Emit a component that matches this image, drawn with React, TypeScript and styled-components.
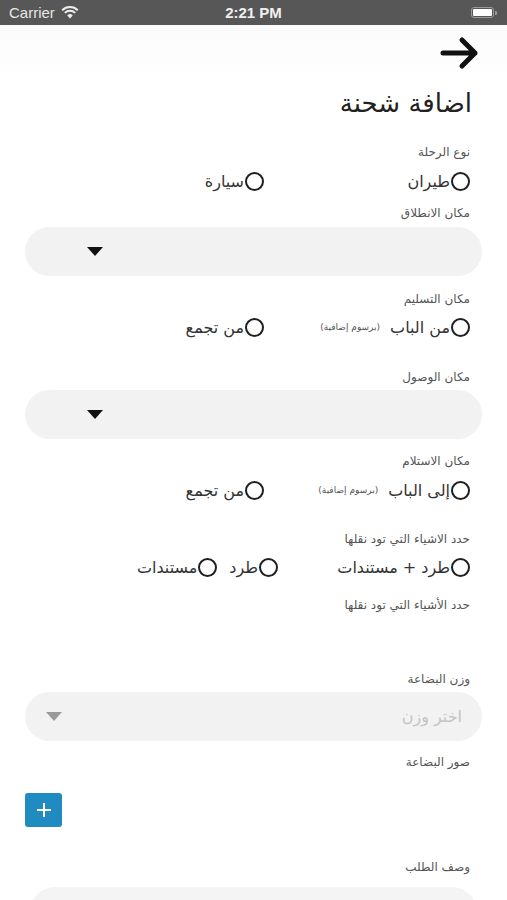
import styled, { createGlobalStyle } from 'styled-components';

const GlobalStyle = createGlobalStyle`
  html, body {
    margin: 0;
    padding: 0;
    background: #ffffff;
  }
  body {
    font-family: 'DejaVu Sans', 'Noto Sans', sans-serif;
    overflow: hidden;
  }
`;

type Option = {
  text: string;
  note?: string;
};

type RadioRowProps = {
  options: Option[];
  firstWidth?: number;
  top: number;
};

const RadioRow: React.FunctionComponent<RadioRowProps> = props => {
  const { options, firstWidth = 206, top } = props;
  const [first, ...rest] = options;

  return (
    <Row $top={top}>
      <FirstCell $width={firstWidth}>
        <RadioOption option={first} />
      </FirstCell>
      {rest.map(option => (
        <RadioOption key={option.text} option={option} />
      ))}
    </Row>
  );
};

const RadioOption: React.FunctionComponent<{ option: Option }> = ({ option }) => (
  <OptionRoot>
    <Circle />
    <OptionText>{option.text}</OptionText>
    {option.note && <Note>{option.note}</Note>}
  </OptionRoot>
);

const Caret: React.FunctionComponent<{ $muted?: boolean }> = ({ $muted }) => (
  <svg width="16" height="9" viewBox="0 0 16 9">
    <path d="M0 0 H16 L8 9 Z" fill={$muted ? '#9a9a9a' : '#111111'} />
  </svg>
);

export default function App() {
  return (
    <Root>
      <GlobalStyle />
      <StatusBar>
        <Carrier>
          Carrier
          <svg width="18" height="13" viewBox="0 0 18 13">
            <path d="M9 12.5 L6.2 9.4 A4 4 0 0 1 11.8 9.4 Z" fill="#eeeeee" />
            <path d="M3.8 6.9 A7.4 7.4 0 0 1 14.2 6.9" stroke="#eeeeee" strokeWidth="2" fill="none" />
            <path d="M1.2 4.2 A11.2 11.2 0 0 1 16.8 4.2" stroke="#eeeeee" strokeWidth="2" fill="none" />
          </svg>
        </Carrier>
        <Clock>2:21 PM</Clock>
        <Battery>
          <BatteryBody>
            <BatteryFill />
          </BatteryBody>
          <BatteryCap />
        </Battery>
      </StatusBar>

      <NavBar>
        <svg width="40" height="34" viewBox="0 0 40 34">
          <path
            d="M3 17 H35 M22 4 L35 17 L22 30"
            stroke="#111111"
            strokeWidth="5"
            strokeLinecap="round"
            strokeLinejoin="round"
            fill="none"
          />
        </svg>
      </NavBar>

      <Form dir="rtl">
        <Title>اضافة شحنة</Title>

        <Label $top={25}>نوع الرحلة</Label>
        <RadioRow top={8} options={[{ text: 'طيران' }, { text: 'سيارة' }]} />

        <Label $top={11}>مكان الانطلاق</Label>
        <Select $top={5}>
          <CaretSlot $inset={62}>
            <Caret />
          </CaretSlot>
        </Select>

        <Label $top={14}>مكان التسليم</Label>
        <RadioRow
          top={7}
          options={[{ text: 'من الباب', note: '(برسوم إضافية)' }, { text: 'من تجمع' }]}
        />

        <Label $top={29}>مكان الوصول</Label>
        <Select $top={4}>
          <CaretSlot $inset={62}>
            <Caret />
          </CaretSlot>
        </Select>

        <Label $top={13}>مكان الاستلام</Label>
        <RadioRow
          top={8}
          options={[{ text: 'إلى الباب', note: '(برسوم إضافية)' }, { text: 'من تجمع' }]}
        />

        <Label $top={28}>حدد الاشياء التي تود نقلها</Label>
        <RadioRow
          top={7}
          firstWidth={192}
          options={[{ text: 'طرد + مستندات' }, { text: 'طرد' }, { text: 'مستندات' }]}
        />

        <Label $top={17}>حدد الأشياء التي تود نقلها</Label>

        <Label $top={56}>وزن البضاعة</Label>
        <Select $top={4}>
          <Placeholder>اختر وزن</Placeholder>
          <CaretSlot $inset={21}>
            <Caret $muted />
          </CaretSlot>
        </Select>

        <Label $top={12}>صور البضاعة</Label>
        <AddRow>
          <AddButton>
            <svg width="16" height="16" viewBox="0 0 16 16">
              <path d="M8 1 V15 M1 8 H15" stroke="#ffffff" strokeWidth="2" />
            </svg>
          </AddButton>
        </AddRow>

        <Label $top={31}>وصف الطلب</Label>
        <TextArea />
      </Form>
    </Root>
  );
}

const Root = styled.div`
  width: 507px;
  min-height: 900px;
  background: #ffffff;
`;

const StatusBar = styled.div`
  height: 25px;
  background: #575757;
  display: flex;
  align-items: center;
  justify-content: space-between;
  padding: 0 10px 0 9px;
  position: relative;
  font-family: 'Liberation Sans', Arial, sans-serif;
  color: #e6e6e6;
`;

const Carrier = styled.div`
  display: flex;
  align-items: center;
  gap: 6px;
  font-size: 15px;
`;

const Clock = styled.div`
  position: absolute;
  left: 0;
  right: 0;
  text-align: center;
  font-size: 15px;
  font-weight: 700;
  color: #f0f0f0;
  pointer-events: none;
`;

const Battery = styled.div`
  display: flex;
  align-items: center;
  gap: 1px;
`;

const BatteryBody = styled.div`
  width: 23px;
  height: 11px;
  border: 1px solid #9a9a9a;
  border-radius: 3px;
  padding: 1px;
  box-sizing: border-box;
  display: flex;
`;

const BatteryFill = styled.div`
  flex: 1;
  background: #ffffff;
  border-radius: 1px;
`;

const BatteryCap = styled.div`
  width: 2px;
  height: 4px;
  background: #9a9a9a;
  border-radius: 0 1px 1px 0;
`;

const NavBar = styled.div`
  height: 55px;
  display: flex;
  align-items: center;
  justify-content: flex-end;
  padding-right: 27px;
  background: linear-gradient(#fbfbfb, #ffffff);
`;

const Form = styled.div`
  display: flex;
  flex-direction: column;
  padding: 8px 25px 0;
`;

const Title = styled.div`
  font-size: 26px;
  line-height: 30px;
  color: #222222;
  padding-right: 10px;
`;

const Label = styled.div<{ $top: number }>`
  margin-top: ${p => p.$top}px;
  padding-right: 12px;
  font-size: 12px;
  line-height: 18px;
  color: #555555;
`;

const Row = styled.div<{ $top: number }>`
  margin-top: ${p => p.$top}px;
  padding-right: 12px;
  height: 24px;
  display: flex;
  align-items: center;
`;

const FirstCell = styled.div<{ $width: number }>`
  width: ${p => p.$width}px;
  flex-shrink: 0;
  display: flex;
`;

const OptionRoot = styled.div`
  display: flex;
  align-items: center;
  margin-left: 12px;
`;

const Circle = styled.div`
  width: 19px;
  height: 19px;
  box-sizing: border-box;
  border: 2.5px solid #1f1f1f;
  border-radius: 50%;
  flex-shrink: 0;
`;

const OptionText = styled.span`
  margin-right: 1px;
  font-size: 16px;
  color: #333333;
`;

const Note = styled.span`
  margin-right: 10px;
  font-size: 9px;
  color: #555555;
`;

const Select = styled.div<{ $top: number }>`
  margin-top: ${p => p.$top}px;
  height: 49px;
  border-radius: 25px;
  background: #f2f2f2;
  display: flex;
  align-items: center;
  justify-content: space-between;
  padding: 0 20px;
`;

const CaretSlot = styled.div<{ $inset: number }>`
  margin-right: auto;
  margin-left: ${p => p.$inset - 20}px;
  display: flex;
`;

const Placeholder = styled.span`
  font-size: 16px;
  color: #c4c4c4;
`;

const AddRow = styled.div`
  margin-top: 22px;
  display: flex;
  justify-content: flex-end;
`;

const AddButton = styled.div`
  width: 37px;
  height: 34px;
  border-radius: 3px;
  background: #1f8bc0;
  display: flex;
  align-items: center;
  justify-content: center;
`;

const TextArea = styled.div`
  margin: 11px 5px 0;
  height: 90px;
  border-radius: 25px;
  background: #f4f4f4;
`;
